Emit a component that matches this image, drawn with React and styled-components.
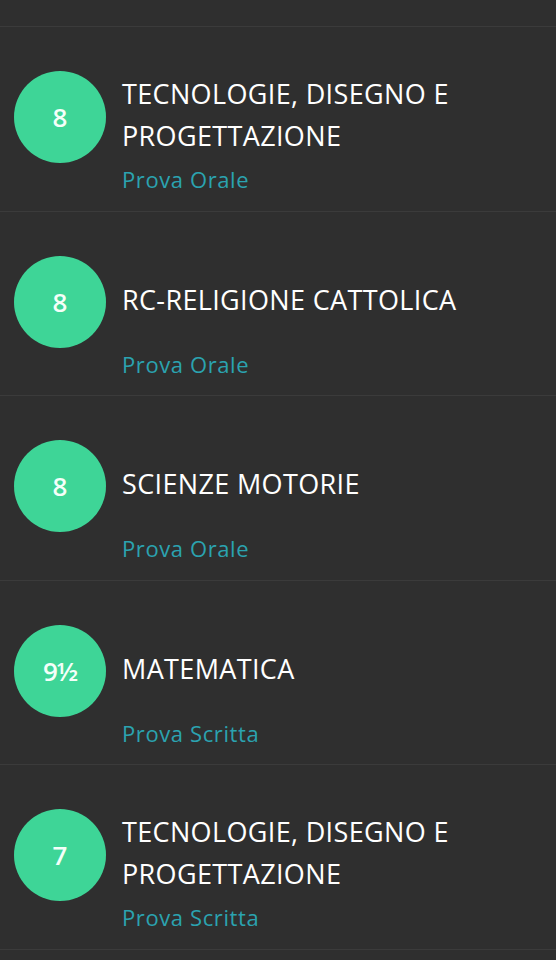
import React from "react";
import styled, { createGlobalStyle } from "styled-components";

const GlobalStyle = createGlobalStyle`
  html, body {
    margin: 0;
    padding: 0;
    background: #2f2f2f;
  }
  body {
    font-family: "Open Sans", "Liberation Sans", sans-serif;
  }
`;

const List = styled.div`
  display: flex;
  flex-direction: column;
  width: 556px;
  background: #2f2f2f;
`;

const TopEdge = styled.div`
  height: 26px;
  border-bottom: 1px solid #3b3b3b;
`;

const Row = styled.div`
  display: flex;
  align-items: flex-start;
  gap: 16px;
  height: 184.5px;
  box-sizing: border-box;
  padding: 44px 0 0 14px;
  border-bottom: 1px solid #3b3b3b;
`;

const Circle = styled.div`
  flex: none;
  width: 92px;
  height: 92px;
  border-radius: 50%;
  background: #3ed597;
  display: flex;
  align-items: center;
  justify-content: center;
  color: #f4fff9;
  font-family: "Open Sans", sans-serif;
  font-weight: 600;
  font-size: 26px;
  letter-spacing: ${(p) => (p.$wide ? "-1px" : "0")};
`;

const Info = styled.div`
  display: flex;
  flex-direction: column;
  margin-top: 2px;
`;

const Title = styled.div`
  height: 84px;
  display: flex;
  align-items: center;
  color: #ffffff;
  font-size: 27px;
  letter-spacing: 0.35px;
  line-height: 42px;
  text-transform: uppercase;
`;

const Kind = styled.div`
  margin-top: 6px;
  color: #2ba3b0;
  font-size: 22px;
  letter-spacing: 0.6px;
  line-height: 32px;
`;

const grades = [
  { vote: "8", subject: "Tecnologie, disegno e\nprogettazione", kind: "Prova Orale" },
  { vote: "8", subject: "RC-Religione cattolica", kind: "Prova Orale" },
  { vote: "8", subject: "Scienze motorie", kind: "Prova Orale" },
  { vote: "9½", subject: "Matematica", kind: "Prova Scritta" },
  { vote: "7", subject: "Tecnologie, disegno e\nprogettazione", kind: "Prova Scritta" },
];

export default function App() {
  return (
    <>
      <GlobalStyle />
      <List>
        <TopEdge />
        {grades.map((g, i) => (
          <Row key={i}>
            <Circle $wide={g.vote.length > 1}>{g.vote}</Circle>
            <Info>
              <Title>
                <span>
                  {g.subject.split("\n").map((line, j) => (
                    <React.Fragment key={j}>
                      {j > 0 && <br />}
                      {line}
                    </React.Fragment>
                  ))}
                </span>
              </Title>
              <Kind>{g.kind}</Kind>
            </Info>
          </Row>
        ))}
      </List>
    </>
  );
}
